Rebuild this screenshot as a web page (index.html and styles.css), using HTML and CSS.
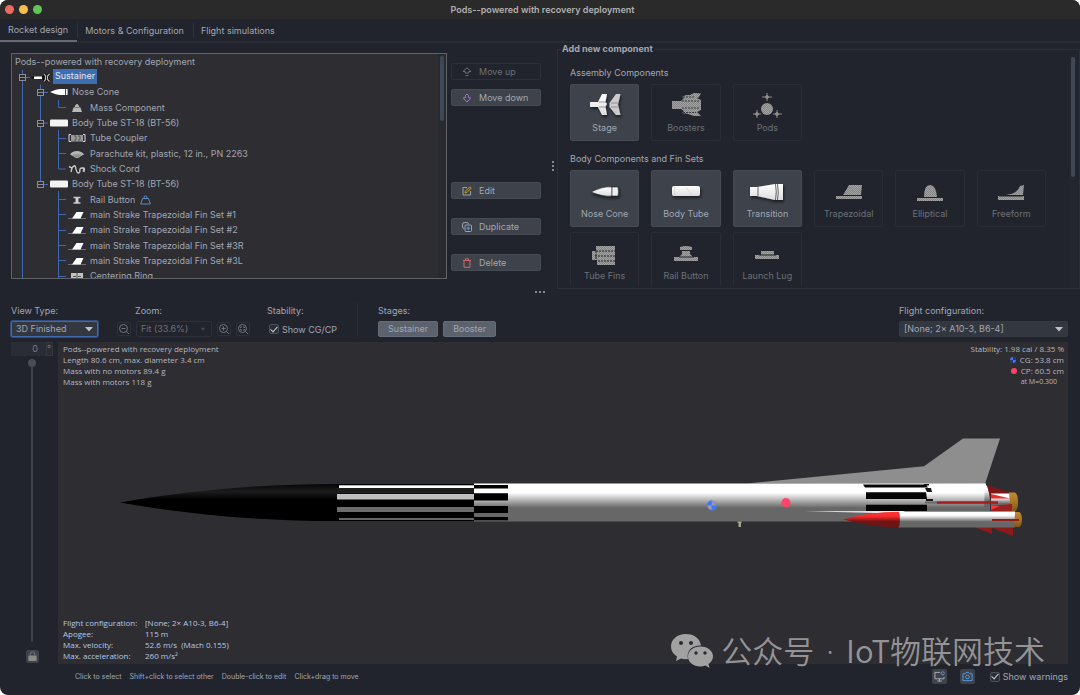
FILE: index.html
```html
<!DOCTYPE html>
<html lang="en">
<head>
<meta charset="utf-8">
<title>Pods--powered with recovery deployment</title>
<link rel="stylesheet" href="styles.css">
</head>
<body>
<svg class="defs" aria-hidden="true">
  <defs>
    <linearGradient id="tube" x1="0" y1="0" x2="0" y2="1">
      <stop offset="0" stop-color="#fff"/><stop offset=".24" stop-color="#fff"/><stop offset=".64" stop-color="#676767"/><stop offset="1" stop-color="#676767"/>
    </linearGradient>
    <linearGradient id="noseFill" x1="0" y1="0" x2="0" y2="1">
      <stop offset="0" stop-color="#050505"/><stop offset=".2" stop-color="#1c1c1c"/><stop offset=".42" stop-color="#000"/><stop offset="1" stop-color="#000"/>
    </linearGradient>
    <linearGradient id="podNose" x1="0" y1="0" x2="0" y2="1">
      <stop offset="0" stop-color="#ff3838"/><stop offset=".3" stop-color="#f62a2a"/><stop offset=".62" stop-color="#6d1414"/><stop offset="1" stop-color="#6d1414"/>
    </linearGradient>
    <linearGradient id="gold" x1="0" y1="0" x2="0" y2="1">
      <stop offset="0" stop-color="#c08a35"/><stop offset=".5" stop-color="#a87425"/><stop offset="1" stop-color="#7d5518"/>
    </linearGradient>
    <linearGradient id="soft" x1="0" y1="0" x2="0" y2="1">
      <stop offset="0" stop-color="#fff"/><stop offset="1" stop-color="#dcdcdc"/>
    </linearGradient>
    <pattern id="mesh" width="2" height="2" patternUnits="userSpaceOnUse">
      <rect width="2" height="2" fill="#848484"/><rect width="1" height="1" fill="#a2a2a2"/><rect x="1" y="1" width="1" height="1" fill="#a2a2a2"/>
    </pattern>
    <filter id="shade" x="-30%" y="-30%" width="160%" height="180%"><feDropShadow dx="1" dy="2" stdDeviation="1.5" flood-color="#000" flood-opacity=".6"/></filter>
    <symbol id="i-nose" viewBox="0 0 18 10"><path d="M0 5Q7 1.800 11 2H15V8H11Q7 8.200 0 5Z" fill="#fff"/><path d="M15.800 2H17.500Q18 5 17.500 8H15.800Z" fill="#eee"/></symbol>
    <symbol id="i-tube" viewBox="0 0 18 10"><rect y="1.500" width="18" height="7" rx="1" fill="#f4f4f2"/></symbol>
    <symbol id="i-fin" viewBox="0 0 18 10"><path d="M0 8.500H18" stroke="#6f7073"/><path d="M4 8.500L8.500 2H15.500L12.500 8.500Z" fill="#fff"/></symbol>
    <symbol id="plus-circle" viewBox="0 0 12 12"><g fill="none" stroke="currentColor"><circle cx="5.500" cy="5.500" r="4"/><path d="M8.500 8.500L11 11M3.500 5.500H7.500M5.500 3.500V7.500"/></g></symbol>
  </defs>
</svg>

<div class="window">
  <header class="titlebar">
    <div class="lights"><span class="red"></span><span class="yellow"></span><span class="green"></span></div>
    <h1>Pods--powered with recovery deployment</h1>
  </header>

  <nav class="tabs">
    <button class="tab active">Rocket design</button>
    <button class="tab">Motors &amp; Configuration</button>
    <button class="tab">Flight simulations</button>
  </nav>

  <section class="upper">
    <div class="design">
      <div class="tree">
        <svg class="lines" width="100" height="230" viewBox="12 54 100 230" aria-hidden="true">
          <g fill="none" stroke="#3c68b4">
            <path d="M22.500 70V284M40.500 84.500V184M26 77.500H30M44 92.500H48M44 123H48M44 184.500H48"/>
            <path d="M58.500 100V107.500H66M58.500 130V169H66M58.500 138.500H66M58.500 153.500H66M58.500 191V284M58.500 199.500H66M58.500 214.500H66M58.500 230.500H66M58.500 245.500H66M58.500 260.500H66M58.500 276.500H66"/>
          </g>
          <g fill="#2c2d31" stroke="#8a8d93">
            <rect x="19.500" y="74.500" width="6" height="6"/><rect x="37.500" y="89.500" width="6" height="6"/><rect x="37.500" y="120.500" width="6" height="6"/><rect x="37.500" y="181.500" width="6" height="6"/>
            <path d="M20 77.500H25M38 92.500H43M38 123.500H43M38 184.500H43"/>
          </g>
        </svg>
        <ul class="rows">
          <li class="l0"><span>Pods--powered with recovery deployment</span></li>
          <li class="l1"><svg viewBox="0 0 18 10"><path d="M-3 5.500L3 4V7.500Z" fill="#0c0c0c"/><path d="M1 4.500H10V7H1Z" fill="#fff"/><path d="M9 4H11V7.500H9Z" fill="#111"/><path d="M11 2L12.500 4V7.500L11 9.500M16.500 2L14.500 4V7.500L16.500 9.500" fill="none" stroke="#111" stroke-width="3"/><path d="M11 2L12.500 4V7.500L11 9.500M16.500 2L14.500 4V7.500L16.500 9.500" fill="none" stroke="#bbb" stroke-width="1.200"/></svg><span class="selected">Sustainer</span></li>
          <li class="l2"><svg><use href="#i-nose"/></svg><span>Nose Cone</span></li>
          <li class="l3"><svg viewBox="0 0 18 10"><path d="M4 9L5.500 4.500H6.500Q7.500 1 9 1T11.500 4.500H12.500L14 9Z" fill="#b9bab8"/><path d="M7 4.500H11" stroke="#777"/></svg><span>Mass Component</span></li>
          <li class="l2"><svg><use href="#i-tube"/></svg><span>Body Tube ST-18 (BT-56)</span></li>
          <li class="l3"><svg viewBox="0 0 18 10"><path d="M3 1.500H1V8.500H3M15 1.500H17V8.500H15" fill="none" stroke="#ddd"/><rect x="3" y="2" width="12" height="6.500" fill="#9b9b9b"/><path d="M6 3H8V7H6M10 3H12V7H10" fill="none" stroke="#555"/></svg><span>Tube Coupler</span></li>
          <li class="l3"><svg viewBox="0 0 18 10"><path d="M2 5.500Q4 2 9 2T16 5.500L14 6.500 10 9H8L4 6.500Z" fill="#b5b5b3"/><path d="M5 6H13M7 7.500H11" stroke="#696b6c" stroke-width=".700" fill="none"/></svg><span>Parachute kit, plastic, 12 in., PN 2263</span></li>
          <li class="l3"><svg viewBox="0 0 18 10"><path d="M1 2.500L4 4 3 8M4 4Q7 0 7.500 3T9 8 12 8M12 8Q11 4 14 4T15 7.500M15 4Q17 3 16 8" fill="none" stroke="#c6c6c4" stroke-width="1.400"/></svg><span>Shock Cord</span></li>
          <li class="l2"><svg><use href="#i-tube"/></svg><span>Body Tube ST-18 (BT-56)</span></li>
          <li class="l3"><svg viewBox="0 0 18 10"><path d="M5.500 2.500H12.500M5.500 8H12.500" stroke="#c8c8c6" stroke-width="1.500"/><path d="M7.500 3H10.500V8H7.500Z" fill="#d0d0ce"/></svg><span>Rail Button</span><svg class="weight" viewBox="0 0 11 10"><path d="M2.500 3.500H8.500L10.300 9H.700ZM4 3.500Q3.500 .800 5.500 .800T7 3.500" fill="none" stroke="#5b8dc0"/></svg></li>
          <li class="l3"><svg><use href="#i-fin"/></svg><span>main Strake Trapezoidal Fin Set #1</span></li>
          <li class="l3"><svg><use href="#i-fin"/></svg><span>main Strake Trapezoidal Fin Set #2</span></li>
          <li class="l3"><svg><use href="#i-fin"/></svg><span>main Strake Trapezoidal Fin Set #3R</span></li>
          <li class="l3"><svg><use href="#i-fin"/></svg><span>main Strake Trapezoidal Fin Set #3L</span></li>
          <li class="l3"><svg viewBox="0 0 18 10"><rect x="3" y="2" width="12" height="7" fill="#c2c2c0"/><path d="M9 2V9M5 5.500H8M10 5.500H13" stroke="#555"/></svg><span>Centering Ring</span></li>
        </ul>
        <div class="scroll"><span></span></div>
      </div>
      <div class="actions">
        <button disabled><svg viewBox="0 0 10 10"><path d="M5 .800L9 4.500H6.800V6H3.200V4.500H1ZM3.500 8.500H6.500" fill="none" stroke="#686d75"/></svg>Move up</button>
        <button><svg viewBox="0 0 10 10"><path d="M5 9L1.200 5 3.500 4.500V2.500L5 1 6.500 2.500V4.500L8.800 5Z" fill="none" stroke="#a077c8"/></svg>Move down</button>
        <button class="edit"><svg viewBox="0 0 10 10"><path d="M5 1.500H1V9H8.500V5" fill="none" stroke="#9ba1ad"/><path d="M3 7L3.500 5 8 .800 9.300 2 5 6.500Z" fill="#59501f" stroke="#d5a93a" stroke-width=".800"/></svg>Edit</button>
        <button class="dup"><svg viewBox="0 0 10 10"><path d="M2 6.500Q.600 6.500 .600 5V2Q.600 .600 2 .600H5Q6.500 .600 6.500 2" fill="none" stroke="#9ba1ad"/><rect x="3" y="3" width="6.500" height="6.500" rx="1" fill="none" stroke="#9ba1ad"/><path d="M6.200 4.500V8M4.500 6.200H8" stroke="#5a9bea"/></svg>Duplicate</button>
        <button class="del"><svg viewBox="0 0 10 10"><path d="M1 2.500H9M3.500 2V.800H6.500V2M2 2.500V9.300H8V2.500" fill="none" stroke="#c9696f"/></svg>Delete</button>
      </div>
      <div class="grip-v"><i></i><i></i><i></i></div>
    </div>

    <fieldset class="palette">
      <legend>Add new component</legend>
      <div class="catalog">
        <h2>Assembly Components</h2>
        <div class="tiles">
          <button class="tile"><svg viewBox="0 0 36 32"><g filter="url(#shade)"><path d="M3 13H11L15 5H20L18.500 13 20 15 18.500 17.500 20 26H15L11 18H3Z" fill="url(#soft)"/><path d="M22.500 14L29 5H33.500L31 15.500 33.500 26H29L22.500 18Z" fill="#ccc"/><path d="M12 13H19M12 18H19M24 14H31M24 18H31" stroke="#777" stroke-width=".700"/></g></svg>Stage</button>
          <button class="tile off"><svg viewBox="0 0 36 32"><path d="M4 12H13L16 9 14 8 18 6H22L26 4 33 4.500 31 8 29 9 33 11V21L29 23 33 27 26 27 20 25 14 24 16 22 13 20H4Z" fill="url(#mesh)"/><path d="M15 8H27M14 12H32M14 19H32M15 23.500H28" stroke="#22252b" stroke-width=".800" stroke-dasharray="2 1"/></svg>Boosters</button>
          <button class="tile off"><svg viewBox="0 0 36 32"><circle cx="18" cy="20" r="6" fill="url(#mesh)"/><g stroke="#8b8b8b" fill="#8b8b8b"><path d="M18 4V12M13 8H23M8 21V29M4 25H12M28 21V29M24 25H33"/><circle cx="18" cy="8" r="1.500"/><circle cx="8" cy="25" r="1.500"/><circle cx="28" cy="25" r="1.500"/></g></svg>Pods</button>
        </div>
        <h2>Body Components and Fin Sets</h2>
        <div class="tiles">
          <button class="tile"><svg viewBox="0 0 36 32"><g filter="url(#shade)" stroke="#222" stroke-width=".600"><path d="M4 17Q16 11 25 12V21Q16 22 4 17Z" fill="url(#soft)"/><path d="M25 12H31Q32 17 31 21H25Z" fill="#eee"/></g></svg>Nose Cone</button>
          <button class="tile"><svg viewBox="0 0 36 32"><g filter="url(#shade)"><rect x="4" y="11" width="28" height="10" rx="2" fill="url(#soft)"/><path d="M7 11Q5.500 16 7 21M18 12L24 20" stroke="#ccc" stroke-width=".600" fill="none"/></g></svg>Body Tube</button>
          <button class="tile"><svg viewBox="0 0 36 32"><g filter="url(#shade)"><path d="M1 12H8L26 9H34V25H26L8 21H1Z" fill="url(#soft)"/><path d="M9 12V21M26.500 9Q28 17 26.500 25M28.500 9Q30 17 28.500 25" stroke="#444" stroke-width=".800" fill="none"/></g></svg>Transition</button>
          <button class="tile off"><svg viewBox="0 0 36 32"><path d="M12 20L18 10H31L30 20ZM5 21H31V24H5Z" fill="url(#mesh)"/><path d="M6 20.500H30" stroke="#222"/></svg>Trapezoidal</button>
          <button class="tile off"><svg viewBox="0 0 36 32"><path d="M12 22Q12 10 18 10T25 22ZM5 23H31V26H5Z" fill="url(#mesh)"/><path d="M6 22.500H30" stroke="#222"/></svg>Elliptical</button>
          <button class="tile off"><svg viewBox="0 0 36 32"><path d="M13 20Q24 19 27 11L31 10 30 20ZM5 21H31V25H5Z" fill="url(#mesh)"/><path d="M6 21H30" stroke="#222"/></svg>Freeform</button>
          <button class="tile off"><svg viewBox="0 0 36 32"><path d="M9 9H28V28H10V23H5V14H9Z" fill="url(#mesh)"/><path d="M9 14H28M8 19H28M8 24H28M9 14V23" stroke="#222" stroke-dasharray="2 1"/></svg>Tube Fins</button>
          <button class="tile off"><svg viewBox="0 0 36 32"><path d="M12 10Q18 8 24 10V13H22V17L25 20H30V24H6V20H11L14 17V13H12Z" fill="url(#mesh)"/><path d="M13 13.500H23M11 20H26" stroke="#222"/></svg>Rail Button</button>
          <button class="tile off"><svg viewBox="0 0 36 32"><path d="M12 14H25V18H30V22H6V18H12Z" fill="url(#mesh)"/><path d="M10 18H27" stroke="#222"/></svg>Launch Lug</button>
        </div>
      </div>
      <div class="scroll"><span></span></div>
    </fieldset>
  </section>

  <div class="grip-h"><i></i><i></i><i></i></div>

  <section class="controls">
    <div class="field view-type"><label for="view">View Type:</label>
      <div class="select focus"><select id="view"><option>3D Finished</option></select><svg viewBox="0 0 8 5"><path d="M0 0H8L4 4.500Z"/></svg></div></div>
    <div class="field zoom"><label for="zoom">Zoom:</label>
      <div class="zoom-row">
        <button aria-label="Zoom out" disabled><svg viewBox="0 0 12 12"><g fill="none" stroke="currentColor"><circle cx="5.500" cy="5.500" r="4"/><path d="M8.500 8.500L11 11M3.500 5.500H7.500"/></g></svg></button>
        <div class="select dim"><select id="zoom" disabled><option>Fit (33.6%)</option></select><svg viewBox="0 0 8 5"><path d="M1 0H7L4 4Z"/></svg></div>
        <button aria-label="Zoom in" disabled><svg><use href="#plus-circle"/></svg></button>
        <button aria-label="Zoom to fit" disabled><svg viewBox="0 0 12 12"><g fill="none" stroke="currentColor"><circle cx="5.500" cy="5.500" r="4"/><path d="M8.500 8.500L11 11M3.500 5V4H5M6 4H7.500V5M3.500 6V7H5M6 7H7.500V6"/></g></svg></button>
      </div></div>
    <div class="field stability"><span>Stability:</span>
      <label class="check"><input type="checkbox" checked>Show CG/CP</label></div>
    <div class="field stages"><span>Stages:</span>
      <div class="stage-row"><button>Sustainer</button><button>Booster</button></div></div>
    <div class="field config"><label for="config">Flight configuration:</label>
      <div class="select"><select id="config"><option>[None; 2× A10-3, B6-4]</option></select><svg viewBox="0 0 8 5"><path d="M0 0H8L4 4.500Z"/></svg></div></div>
  </section>

  <section class="stage-area">
    <div class="rotation">
      <div class="spinner"><input type="text" value="0" aria-label="Rotation" disabled><span>°</span></div>
      <div class="slider"><span class="knob"></span></div>
      <button class="lock" aria-label="Lock rotation"><svg viewBox="0 0 12 12"><path d="M3.500 5V3.500Q3.500 1 6 1T8.500 3.500V5" fill="none" stroke="#7d7e7c"/><rect x="1.500" y="5" width="9" height="6" rx="1" fill="#8b8a83"/></svg></button>
    </div>
    <div class="view">
      <svg class="rocket" viewBox="58 342 1010 322" role="img" aria-label="Rocket side view">
        <path d="M747 483.500L924 466.300 963 438.500H1000L985 484Z" fill="#8e8e8e"/>
        <path d="M120 502.500C185 491 255 484 338 484V521C255 521 185 514 120 502.500Z" fill="url(#noseFill)"/>
        <rect x="337" y="484" width="137" height="37" fill="#000"/>
        <rect x="337" y="488" width="137" height="5.500" fill="#1d1d1d"/>
        <g><rect x="339" y="485.300" width="135" height="2.700" fill="#fff"/><rect x="337" y="494" width="137" height="5.500" fill="#bebebe"/><rect x="337" y="507" width="137" height="5" fill="#6c6c6c"/><rect x="339" y="518" width="135" height="2" fill="#676767"/></g>
        <rect x="474" y="483.500" width="512" height="38" fill="url(#tube)"/>
        <path d="M474 485H508V488.500H474ZM474 493.300H508V500.500H474ZM474 506H508V513H474ZM474 517H508V520.300H474Z" fill="#000"/>
        <rect x="899" y="511" width="93" height="11" fill="#2d2d32"/>
        <path d="M985 483.500Q991 489 990 511H984Z" fill="url(#tube)"/>
        <path d="M863 484.500H926L928 487.500H865ZM866 492.300H926L927 499H866ZM866 504.700H927V511H866Z" fill="#050505"/>
        <path d="M923 484H929V485.500H926ZM925 488H931L932 492H927ZM926 499H933V501H926Z" fill="#151515"/>
        <rect x="925" y="501.500" width="12" height="2" fill="#666"/>
        <path d="M987 485L1011 493V497H990Z" fill="#7d1616"/>
        <rect x="991" y="493.500" width="20" height="16" fill="url(#tube)"/>
        <path d="M991 494L1010 498.500H991Z" fill="#e92d2d"/><path d="M991 506L1012 504V511H991Z" fill="#9b2020"/><path d="M991 506H1000L991 510Z" fill="#ff3535"/>
        <rect x="937" y="501.300" width="61" height="2.500" fill="#a51c1c"/>
        <path d="M1009 492.500H1015Q1018 494 1018 502T1015 511.500H1012V504H1010Z" fill="url(#gold)"/>
        <path d="M805 511.200L905 511 900 513.500Z" fill="#eee"/>
        <path d="M974 527L992 534V528L1013 536V526Z" fill="#8b1b1b"/>
        <rect x="898" y="511.500" width="117" height="16" fill="url(#tube)"/>
        <path d="M843 519.500Q868 512 899 511.800Q901 519 899 527.500Q868 526.500 843 519.500Z" fill="url(#podNose)"/>
        <path d="M1015 512H1019Q1022 513 1022 519.500T1019 527H1014Z" fill="url(#gold)"/>
        <rect x="992" y="519" width="27" height="2" fill="#941919"/>
        <path d="M737.500 521.500H741.500V523H741V527H738.500V523H737.500Z" fill="#a4a48c"/>
        <circle cx="711.700" cy="505.500" r="4.500" fill="#9b9da3"/><path d="M711.700 505.500V500.500A5 5 0 0 0 706.700 505.500ZM711.700 505.500V510.500A5 5 0 0 0 716.700 505.500Z" fill="#3f74ff"/><circle cx="711.700" cy="505.500" r="4.500" fill="none" stroke="#4f80f5" stroke-width=".700"/>
        <circle cx="786" cy="502.700" r="4.600" fill="#ff4668"/>
      </svg>
      <div class="facts">
        <div><p>Pods--powered with recovery deployment</p><p>Length 80.6 cm, max. diameter 3.4 cm</p><p>Mass with no motors 89.4 g</p><p>Mass with motors 118 g</p></div>
        <div class="right"><p>Stability: 1.98 cal / 8.35 %</p>
          <p><svg viewBox="0 0 6 6"><circle cx="3" cy="3" r="3" fill="#3f74ff"/><path d="M3 3V0A3 3 0 0 1 6 3ZM3 3V6A3 3 0 0 1 0 3Z" fill="#2a3a66"/></svg>CG: 53.8 cm</p>
          <p><svg viewBox="0 0 6 6"><circle cx="3" cy="3" r="3" fill="#ff4668"/></svg>CP: 60.5 cm</p><p class="mach">at M=0.300</p></div>
      </div>
      <dl class="flight">
        <dt>Flight configuration:</dt><dd>[None; 2× A10-3, B6-4]</dd>
        <dt>Apogee:</dt><dd>115 m</dd>
        <dt>Max. velocity:</dt><dd>52.6 m/s&nbsp; (Mach 0.155)</dd>
        <dt>Max. acceleration:</dt><dd>260 m/s²</dd>
      </dl>
    </div>
  </section>

  <footer class="status">
    <div class="hints"><span>Click to select</span><span>Shift+click to select other</span><span>Double-click to edit</span><span>Click+drag to move</span></div>
    <button aria-label="Display settings"><svg viewBox="0 0 12 12"><path d="M6.500 1.500H1V8.500H11V6.500M6 8.500V11M3.500 11H8.500" fill="none" stroke="#b1b6be"/><circle cx="9.500" cy="2.500" r="1.700" fill="none" stroke="#5a9bea"/></svg></button>
    <button aria-label="Save image"><svg viewBox="0 0 12 12"><path d="M1 3H3.500L4.500 1.500H7.500L8.500 3H11V10.500H1Z" fill="none" stroke="#5a9bea"/><circle cx="6" cy="6.500" r="2" fill="none" stroke="#5a9bea"/></svg></button>
    <label class="check"><input type="checkbox" checked>Show warnings</label>
  </footer>

  <div class="watermark">
    <svg viewBox="0 0 42 34"><path d="M15 0C6 0 0 5.500 0 12.500 0 17 2.500 20 6 22.500L5 27 10 24.500Q13 25.500 17 25C15 16 22 11 30 11.500 29 4.500 23 0 15 0Z" fill="#a2a2a3"/><path d="M29.500 12.500C22 12.500 17 17 17 22.500S22 32.500 29.500 32.500Q32 32.500 34.500 31.500L38.500 34 37.500 30C40 28 42 25.500 42 22.500 42 17 37 12.500 29.500 12.500Z" fill="#a2a2a3"/><g fill="#2b2c30"><circle cx="10" cy="9" r="2"/><circle cx="20" cy="9" r="2"/><circle cx="25" cy="19" r="1.700"/><circle cx="34" cy="19" r="1.700"/></g></svg>
    <span>公众号<span class="dot"> · </span>IoT物联网技术</span>
  </div>
</div>
</body>
</html>
```
FILE: styles.css
```css
:root {
  --bg: #21242c;
  --panel: #2d2d32;
  --raised: #3d424b;
  --line: #2d3038;
  --text: #a1a7b3;
  --dim: #6b7079;
}

* { box-sizing: border-box; }

body {
  margin: 0;
  background: #fff;
  color: var(--text);
  font: 9px/14px Inter, "Liberation Sans", sans-serif;
}

h1, h2, p, ul, dl, dd { margin: 0; padding: 0; }

button, select, input { font: inherit; color: inherit; margin: 0; }

button {
  display: flex;
  align-items: center;
  border: 1px solid #454a53;
  border-radius: 2px;
  background: var(--raised);
  padding: 0;
}

.defs { position: absolute; width: 0; height: 0; }

.window {
  position: relative;
  display: flex;
  flex-direction: column;
  min-height: 100vh;
  border-radius: 8px;
  overflow: hidden;
  background: var(--bg);
}

.titlebar {
  display: grid;
  grid-template-columns: 1fr auto 1fr;
  align-items: center;
  height: 19px;
  padding-left: 5px;
  background: #2a2a2a;
}

.titlebar h1 { font-size: 9px; font-weight: 600; color: #b1b1b1; }
.lights { display: flex; gap: 5px; }
.lights span { width: 9px; height: 9px; border-radius: 50%; }
.red { background: #ed6a5e; }
.yellow { background: #f5bf4f; }
.green { background: #61c554; }

.tabs { display: flex; height: 24px; border-bottom: 2px solid #292c34; }

.tab {
  height: 23px;
  padding: 0 9px 0 8px;
  border: 0;
  border-radius: 0;
  background: none;
}

.tab + .tab { background: linear-gradient(#30333b, #30333b) left center / 1px 15px no-repeat; }
.tab.active { border-bottom: 2px solid #656a72; }

.upper { display: grid; grid-template-columns: 557fr 523fr; height: 246px; }

.design { display: flex; padding: 10px 0 0 11px; }

.tree {
  display: grid;
  flex: 1;
  grid-template-columns: 1fr 8px;
  height: 226px;
  border: 1px solid #606268;
  background: var(--panel);
  overflow: hidden;
}

.lines { grid-area: 1 / 1; }

.rows {
  grid-area: 1 / 1;
  display: grid;
  grid-template-rows: repeat(15, 1fr);
  height: 230px;
  list-style: none;
}

.rows li { display: flex; align-items: center; gap: 4px; white-space: nowrap; }
.rows svg { width: 18px; height: 10px; overflow: visible; }
.rows .l0 { padding-left: 3px; }
.rows .l1 { padding-left: 21px; }
.rows .l2 { padding-left: 38px; }
.rows .l3 { padding-left: 56px; }
.rows .selected { padding: 0 2px 1px; margin-left: -2px; background: #3f6db2; color: #e4e8ee; }
.rows .weight { width: 11px; margin-left: 1px; }

.scroll { padding: 2px; background: #292a2f; }
.scroll span { display: block; width: 4px; height: 65px; border-radius: 2px; background: #414855; }

.actions { display: flex; flex-direction: column; gap: 9px; width: 90px; margin-left: 4px; padding-top: 10px; }
.actions button { flex: none; gap: 7px; height: 17px; padding-left: 10px; }
.actions svg { width: 10px; height: 10px; }
.actions button:disabled { background: none; border-color: var(--line); color: var(--dim); }
.actions .edit { margin-top: 67px; }
.actions .dup, .actions .del { margin-top: 10px; }

.grip-v { display: flex; flex-direction: column; justify-content: center; gap: 2px; width: 16px; align-items: center; padding: 0 0 10px 8px; }
.grip-v i, .grip-h i { width: 2px; height: 2px; border-radius: 1px; background: #a6abb3; }

.palette {
  display: flex;
  min-width: 0;
  height: 246px;
  margin: 0;
  padding: 0 2px 0 12px;
  border: 1px solid var(--line);
}

.palette legend { height: 12px; line-height: 12px; margin-left: -9px; padding: 0 1px; font-weight: 700; }
.catalog { flex: 1; height: 231px; padding-top: 10px; overflow: hidden; }
.catalog h2 { height: 16px; line-height: 16px; margin-bottom: 3px; font-size: 9px; font-weight: 400; }
.tiles + h2 { margin-top: 10px; }
.tiles { display: grid; grid-template-columns: repeat(6, 1fr); gap: 5px 12px; max-width: 476px; }

.tile { flex-direction: column; height: 57px; padding-top: 4px; }
.tile svg { width: 36px; height: 32px; overflow: visible; }
.tile.off { border-color: #292c34; background: none; color: var(--dim); }
.palette .scroll { background: #23262e; }
.palette .scroll span { height: 120px; }

.grip-h { display: flex; justify-content: center; align-items: center; gap: 2px; height: 6px; flex: none; }

.controls { display: flex; height: 43px; margin-top: 4px; padding: 4px 12px 0 11px; align-items: flex-start; }
.field { display: flex; flex-direction: column; gap: 3px; white-space: nowrap; }
.field > label, .field > span { height: 15px; line-height: 15px; }

.select { display: grid; grid-template-columns: 1fr 16px; align-items: center; height: 16px; border: 1px solid #353941; border-radius: 2px; background: #333740; }
.select select { grid-area: 1 / 1 / 2 / 3; width: 100%; height: 14px; padding: 0 4px; border: 0; background: none; appearance: none; opacity: 1; line-height: 14px; }
.select svg { grid-area: 1 / 2; width: 8px; height: 5px; fill: #bdc2ca; justify-self: center; pointer-events: none; }
.select.focus { border-color: #4269ad; box-shadow: 0 0 0 1px #304d82; }
.select.dim { background: none; border-color: var(--line); color: var(--dim); }
.select.dim svg { fill: #454951; }

.view-type { width: 87px; }
.zoom { margin-left: 19px; }
.zoom label { margin-left: 18px; }
.zoom-row { display: flex; gap: 5px; }
.zoom-row .select { width: 76px; }
.zoom-row button { width: 14px; height: 14px; border-color: var(--line); background: none; color: #71757c; justify-content: center; margin-top: 1px; }
.zoom-row svg { flex: none; width: 12px; height: 12px; }
.zoom-row .select svg { width: 6px; height: 5px; }

.stability { margin-left: 17px; padding-right: 20px; border-right: 1px solid var(--line); }
.stages { margin-left: 20px; }
.stage-row { display: flex; gap: 5px; }
.stage-row button { height: 16px; padding: 0 9px; border-color: #656b78; background: #5b616d; }
.config { width: 169px; margin-left: auto; }

.check { display: flex; align-items: center; gap: 3px; }
.field > .check { height: 16px; padding-left: 2px; }
.check input { display: grid; place-items: center; appearance: none; width: 10px; height: 10px; border: 1px solid #4b5059; border-radius: 2px; background: #2a2e36; }
.check input:checked::before { content: ""; width: 3px; height: 6px; margin-top: -2px; border: solid #c5cad1; border-width: 0 1px 1px 0; transform: rotate(42deg); }

.stage-area { display: grid; grid-template-columns: 42px 1fr; gap: 5px; flex: 1; padding: 0 12px 0 11px; min-height: 322px; }
.rotation { display: flex; flex-direction: column; align-items: center; }
.spinner { display: flex; width: 42px; height: 14px; background: #2a2d35; color: #777c85; }
.spinner input { width: 35px; padding: 0 8px 0 0; border: 0; background: none; text-align: right; }
.spinner span { width: 7px; border: 1px solid #343740; line-height: 12px; }
.slider { flex: 1; width: 2px; margin: 3px 0 8px; background: #3d424b; }
.knob { display: block; width: 8px; height: 8px; margin: 0 0 0 -3px; border-radius: 50%; background: #484d57; }
.lock { width: 13px; height: 13px; margin-bottom: 1px; justify-content: center; border: 0; }
.lock svg { width: 11px; height: 11px; }

.view { display: grid; grid-template-rows: 1fr auto; background: var(--panel); font: 8px/11px "Open Sans", "Noto Sans", sans-serif; color: #b5b8c0; }
.rocket { grid-area: 1 / 1 / 3 / 2; width: 100%; height: 100%; }
.facts { grid-area: 1 / 1; display: flex; justify-content: space-between; padding: 1px 4px 0 5px; }
.facts .right { text-align: right; }
.facts svg { width: 6px; height: 6px; margin-right: 4px; }
.facts .mach { padding-right: 7px; font-size: 7px; }
.flight { grid-area: 2 / 1; display: grid; grid-template-columns: 82px 1fr; padding: 0 5px 3px; color: #b4cbe8; }

.status { display: flex; align-items: flex-start; height: 31px; padding: 5px 12px 0 75px; }
.hints { display: flex; gap: 8px; flex: 1; font-size: 7px; line-height: 16px; }
.status button { width: 15px; height: 15px; justify-content: center; border: 0; margin-right: 13px; }
.status button svg { width: 11px; height: 11px; }
.status .check { height: 15px; margin-left: 2px; }

.watermark { position: absolute; right: 35px; bottom: 26px; display: flex; align-items: center; gap: 8px; color: #949496; font: 350 31px/36px "Noto Sans CJK SC", sans-serif; white-space: nowrap; pointer-events: none; }
.watermark svg { width: 42px; height: 34px; }
.watermark .dot { padding: 0 4px; font-family: "Noto Sans", sans-serif; }
```
